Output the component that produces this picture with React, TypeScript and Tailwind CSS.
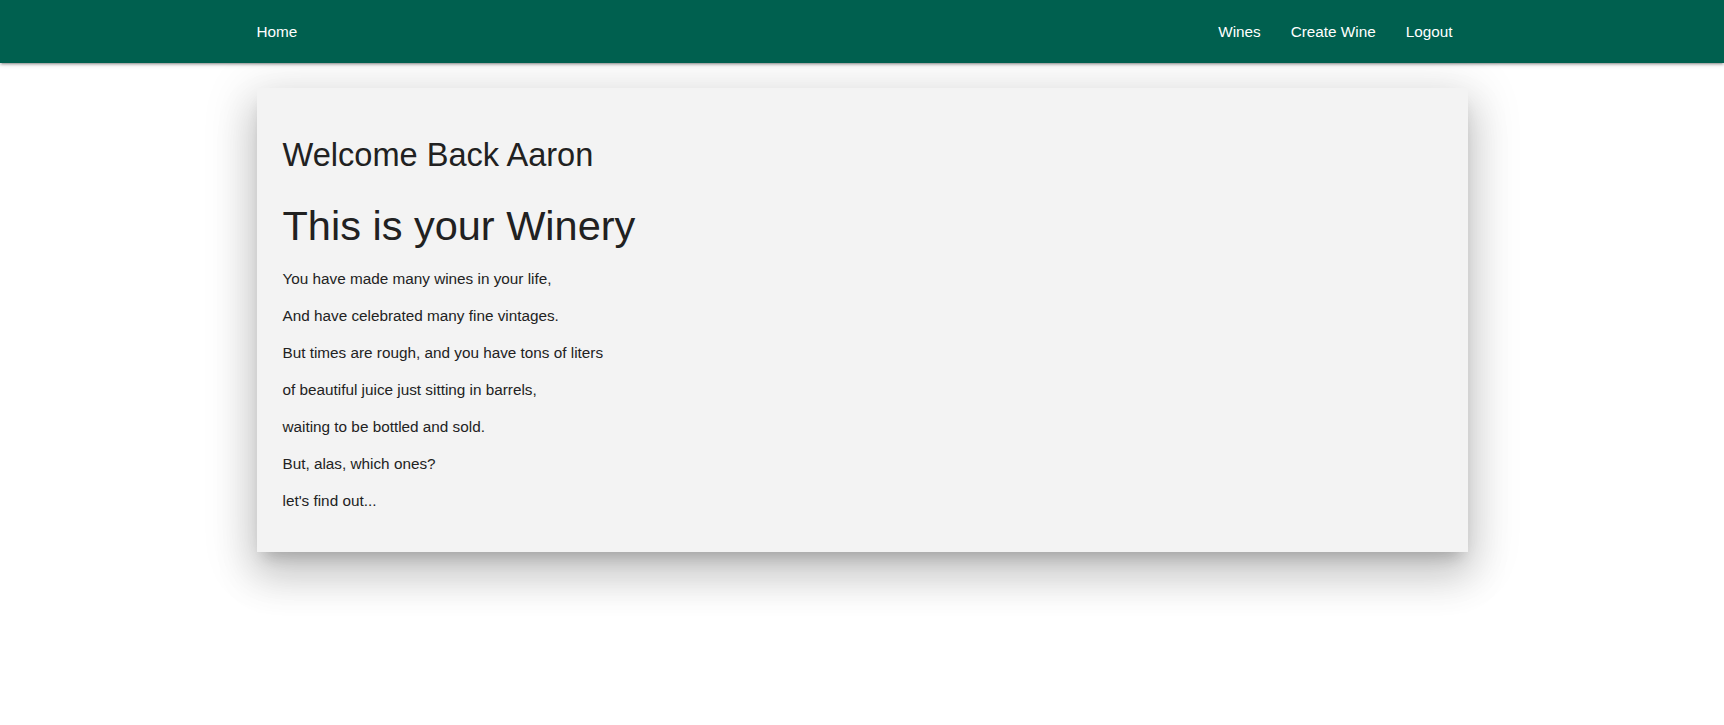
export default function App() {
  const lines = [
    "You have made many wines in your life,",
    "And have celebrated many fine vintages.",
    "But times are rough, and you have tons of liters",
    "of beautiful juice just sitting in barrels,",
    "waiting to be bottled and sold.",
    "But, alas, which ones?",
    "let's find out...",
  ];
  return (
    <div
      className="min-h-[725px] bg-white"
      style={{ fontFamily: '"Liberation Sans", Arial, sans-serif' }}
    >
      <nav className="h-[63px] bg-[#00604f] text-white shadow-[0_2px_2px_0_rgba(0,0,0,0.14),0_3px_1px_-2px_rgba(0,0,0,0.12),0_1px_5px_0_rgba(0,0,0,0.2)] relative z-10">
        <div className="mx-auto flex h-full w-[1211px] items-center justify-between">
          <a className="text-[15.3px] leading-[63px]">Home</a>
          <ul className="flex">
            <li><a className="block px-[15px] text-[15.3px] leading-[63px]">Wines</a></li>
            <li><a className="block px-[15px] text-[15.3px] leading-[63px]">Create Wine</a></li>
            <li><a className="block px-[15px] text-[15.3px] leading-[63px]">Logout</a></li>
          </ul>
        </div>
      </nav>
      <div className="mx-auto mt-[25px] w-[1211px] bg-[#f3f3f3] pl-[26px] pr-6 pt-[49px] pb-[40px] shadow-[0_24px_38px_3px_rgba(0,0,0,0.14),0_9px_46px_8px_rgba(0,0,0,0.12),0_11px_15px_-7px_rgba(0,0,0,0.2)]">
        <h4 className="text-[32.6px] leading-[36px] text-[#212121]">Welcome Back Aaron</h4>
        <h3 className="mt-[29px] text-[41.5px] leading-[48px] text-[#212121]">This is your Winery</h3>
        <div className="mt-[18px] flex flex-col gap-[15px]">
          {lines.map((l) => (
            <p key={l} className="text-[15.3px] leading-[22px] text-[#222]">{l}</p>
          ))}
        </div>
      </div>
    </div>
  );
}
